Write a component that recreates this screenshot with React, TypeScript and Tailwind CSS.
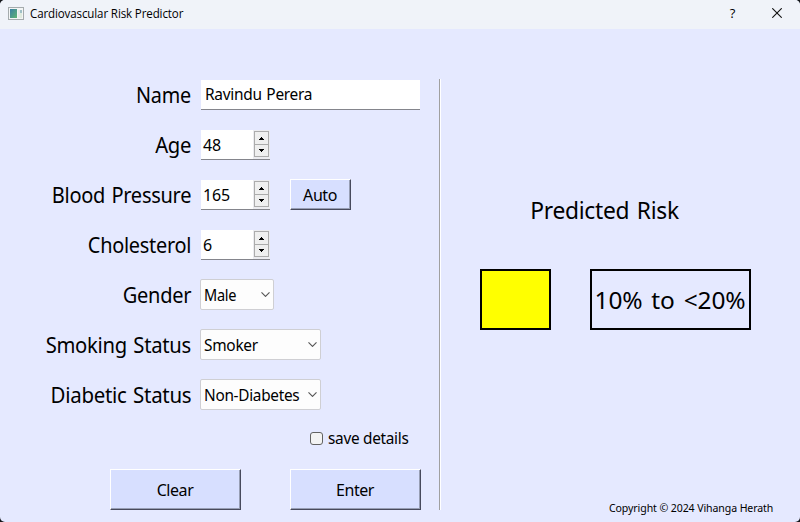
import type { ReactNode } from "react";

function AppIcon() {
  return (
    <svg width="16" height="13" viewBox="0 0 16 13" className="ml-2" shapeRendering="crispEdges">
      <defs>
        <linearGradient id="pane" x1="0" y1="0" x2="1" y2="1">
          <stop offset="0" stopColor="#3b7fa3" />
          <stop offset="1" stopColor="#5fb573" />
        </linearGradient>
      </defs>
      <rect x="0.5" y="0.5" width="15" height="12" fill="#f3f5f5" stroke="#a5abad" />
      <rect x="2" y="2" width="7" height="9" fill="url(#pane)" />
      <rect x="10" y="3" width="2" height="8" fill="#e8ebea" />
      <rect x="12" y="3" width="2" height="3" fill="#9fc0c6" />
      <rect x="12" y="6" width="2" height="5" fill="#e0ebdf" />
    </svg>
  );
}

function TitleBar() {
  return (
    <header className="flex h-[29px] items-center bg-[#f0f3f9] pb-[3px]">
      <AppIcon />
      <div className="ml-1.5 flex-1 pt-px">
        <span className="block w-max origin-left scale-x-[0.963] text-[12px] leading-4 tracking-[-0.13px] font-['Open_Sans',sans-serif]">
          Cardiovascular Risk Predictor
        </span>
      </div>
      <span className="w-[45px] text-center text-[13px] font-medium leading-4 font-['Open_Sans',sans-serif]">?</span>
      <span className="flex w-[45px] justify-center pr-px">
        <svg width="10" height="10" viewBox="0 0 10 10" stroke="#111" strokeWidth="1.1">
          <path d="M0.3 0.3 9.7 9.7M9.7 0.3 0.3 9.7" />
        </svg>
      </span>
    </header>
  );
}

function Row({ label, scale, children }: { label: string; scale: string; children: ReactNode }) {
  return (
    <div className="flex h-[31px]">
      <div className="flex w-[191px] shrink-0 justify-end">
        <span className={`origin-right whitespace-nowrap text-[22px] leading-[30px] tracking-[-0.3px] [word-spacing:1.5px] ${scale}`}>
          {label}
        </span>
      </div>
      <div className="ml-[9px] flex">{children}</div>
    </div>
  );
}

function Spin({ value }: { value: string }) {
  return (
    <div className="ml-px mt-px flex h-[30px] w-[69px] justify-between border-b border-[#84858c] bg-white">
      <span className="pl-[2px] text-[16px] leading-[30px] tracking-[-0.2px]">{value}</span>
      <div className="flex w-[17px] justify-center bg-[#ececf0] pt-px">
        <div className="flex h-[26px] w-[15px] flex-col border border-[#acacac] bg-[#efefef]">
          <span className="flex h-[13px] items-center justify-center border-b border-[#acacac]">
            <svg width="5" height="3" viewBox="0 0 5 3" shapeRendering="crispEdges"><path d="M0 2h5v1H0zM1 1h3v1H1zM2 0h1v1H2z" /></svg>
          </span>
          <span className="flex flex-1 items-center justify-center">
            <svg width="5" height="3" viewBox="0 0 5 3" shapeRendering="crispEdges"><path d="M0 0h5v1H0zM1 1h3v1H1zM2 2h1v1H2z" /></svg>
          </span>
        </div>
      </div>
    </div>
  );
}

function Combo({ value, width, scale }: { value: string; width: string; scale: string }) {
  return (
    <div className={`flex h-[31px] items-center justify-between rounded-[2px] border border-[#cfcfd3] bg-[#fdfdfd] pl-[3px] pr-[3px] ${width}`}>
      <span className={`origin-left whitespace-nowrap pt-px text-[16px] leading-7 tracking-[-0.3px] ${scale}`}>{value}</span>
      <svg width="9" height="5" viewBox="0 0 9 5" fill="none" stroke="#555" strokeWidth="1.1" className="shrink-0">
        <path d="M0.5 0.4 4.5 4.4 8.5 0.4" />
      </svg>
    </div>
  );
}

function PushButton({ children, size }: { children: string; size: string }) {
  return (
    <div className={`border border-b-[#484a5c] border-l-white border-r-[#484a5c] border-t-white ${size}`}>
      <div className="flex h-full items-center justify-center border-b border-r border-[#979eb4] bg-[#d7dfff] pt-px text-[16px] tracking-[-0.45px]">
        {children}
      </div>
    </div>
  );
}

export default function App() {
  return (
    <div className="h-[522px] w-[800px] bg-[#15171a]">
      <div className="flex h-full flex-col overflow-hidden rounded-[5px] bg-[#e5e9ff] text-black font-['Noto_Sans',sans-serif]">
        <TitleBar />
        <main className="flex flex-1 pt-[50px]">
          <section className="w-[439px]">
            <div className="flex flex-col gap-[19px]">
              <Row label="Name" scale="scale-x-[0.9]">
                <div className="ml-px mt-px h-[30px] w-[219px] border-b border-[#84858c] bg-white pl-1 text-[16px] leading-[28px] tracking-[-0.3px]">
                  <span className="block w-max origin-left scale-x-[0.965] [word-spacing:1px]">Ravindu Perera</span>
                </div>
              </Row>
              <Row label="Age" scale="scale-x-[0.92]"><Spin value="48" /></Row>
              <Row label="Blood Pressure" scale="scale-x-[0.91]">
                <Spin value="165" />
                <div className="ml-5"><PushButton size="h-[31px] w-[61px]">Auto</PushButton></div>
              </Row>
              <Row label="Cholesterol" scale="scale-x-[0.905]"><Spin value="6" /></Row>
              <Row label="Gender" scale="scale-x-[0.91]"><Combo value="Male" width="w-[74px]" scale="scale-x-[0.91]" /></Row>
              <Row label="Smoking Status" scale="scale-x-[0.92]"><Combo value="Smoker" width="w-[121px]" scale="scale-x-[0.965]" /></Row>
              <Row label="Diabetic Status" scale="scale-x-[0.93]"><Combo value="Non-Diabetes" width="w-[121px]" scale="scale-x-[0.96]" /></Row>
            </div>
            <div className="ml-[310px] mt-[17px] flex h-[22px] items-center">
              <span className="h-[13px] w-[13px] rounded-[3px] border border-[#626262] bg-[#f3f3f3]" />
              <span className="ml-[5px] origin-left scale-x-[0.96] whitespace-nowrap text-[16px] leading-[22px] tracking-[-0.3px]">save details</span>
            </div>
            <div className="ml-[110px] mt-5 flex gap-[49px]">
              <PushButton size="h-[41px] w-[131px]">Clear</PushButton>
              <PushButton size="h-[41px] w-[131px]">Enter</PushButton>
            </div>
          </section>
          <div className="h-[431px] w-[2px] border-l border-r border-l-[#a0a0a0] border-r-white" />
          <section className="flex flex-1 flex-col pl-[39px]">
            <h1 className="mt-[113px] w-[249px] scale-x-[0.95] text-center text-[24px] leading-9 tracking-[-0.3px] [word-spacing:2px]">Predicted Risk</h1>
            <div className="mt-[41px] flex gap-[39px]">
              <div className="h-[61px] w-[71px] border-2 border-black bg-[#ffff00]" />
              <div className="flex h-[61px] w-[161px] items-center justify-center whitespace-nowrap border-2 border-black text-[24px]">
                <span className="scale-x-[1.02] tracking-[-0.1px] [word-spacing:2.5px]">10% to &lt;20%</span>
              </div>
            </div>
            <footer className="mb-[5px] ml-[129px] mt-auto w-max origin-left scale-x-[0.96] text-[11px] leading-[18px] tracking-[-0.1px]">
              Copyright © 2024 Vihanga Herath
            </footer>
          </section>
        </main>
      </div>
    </div>
  );
}
